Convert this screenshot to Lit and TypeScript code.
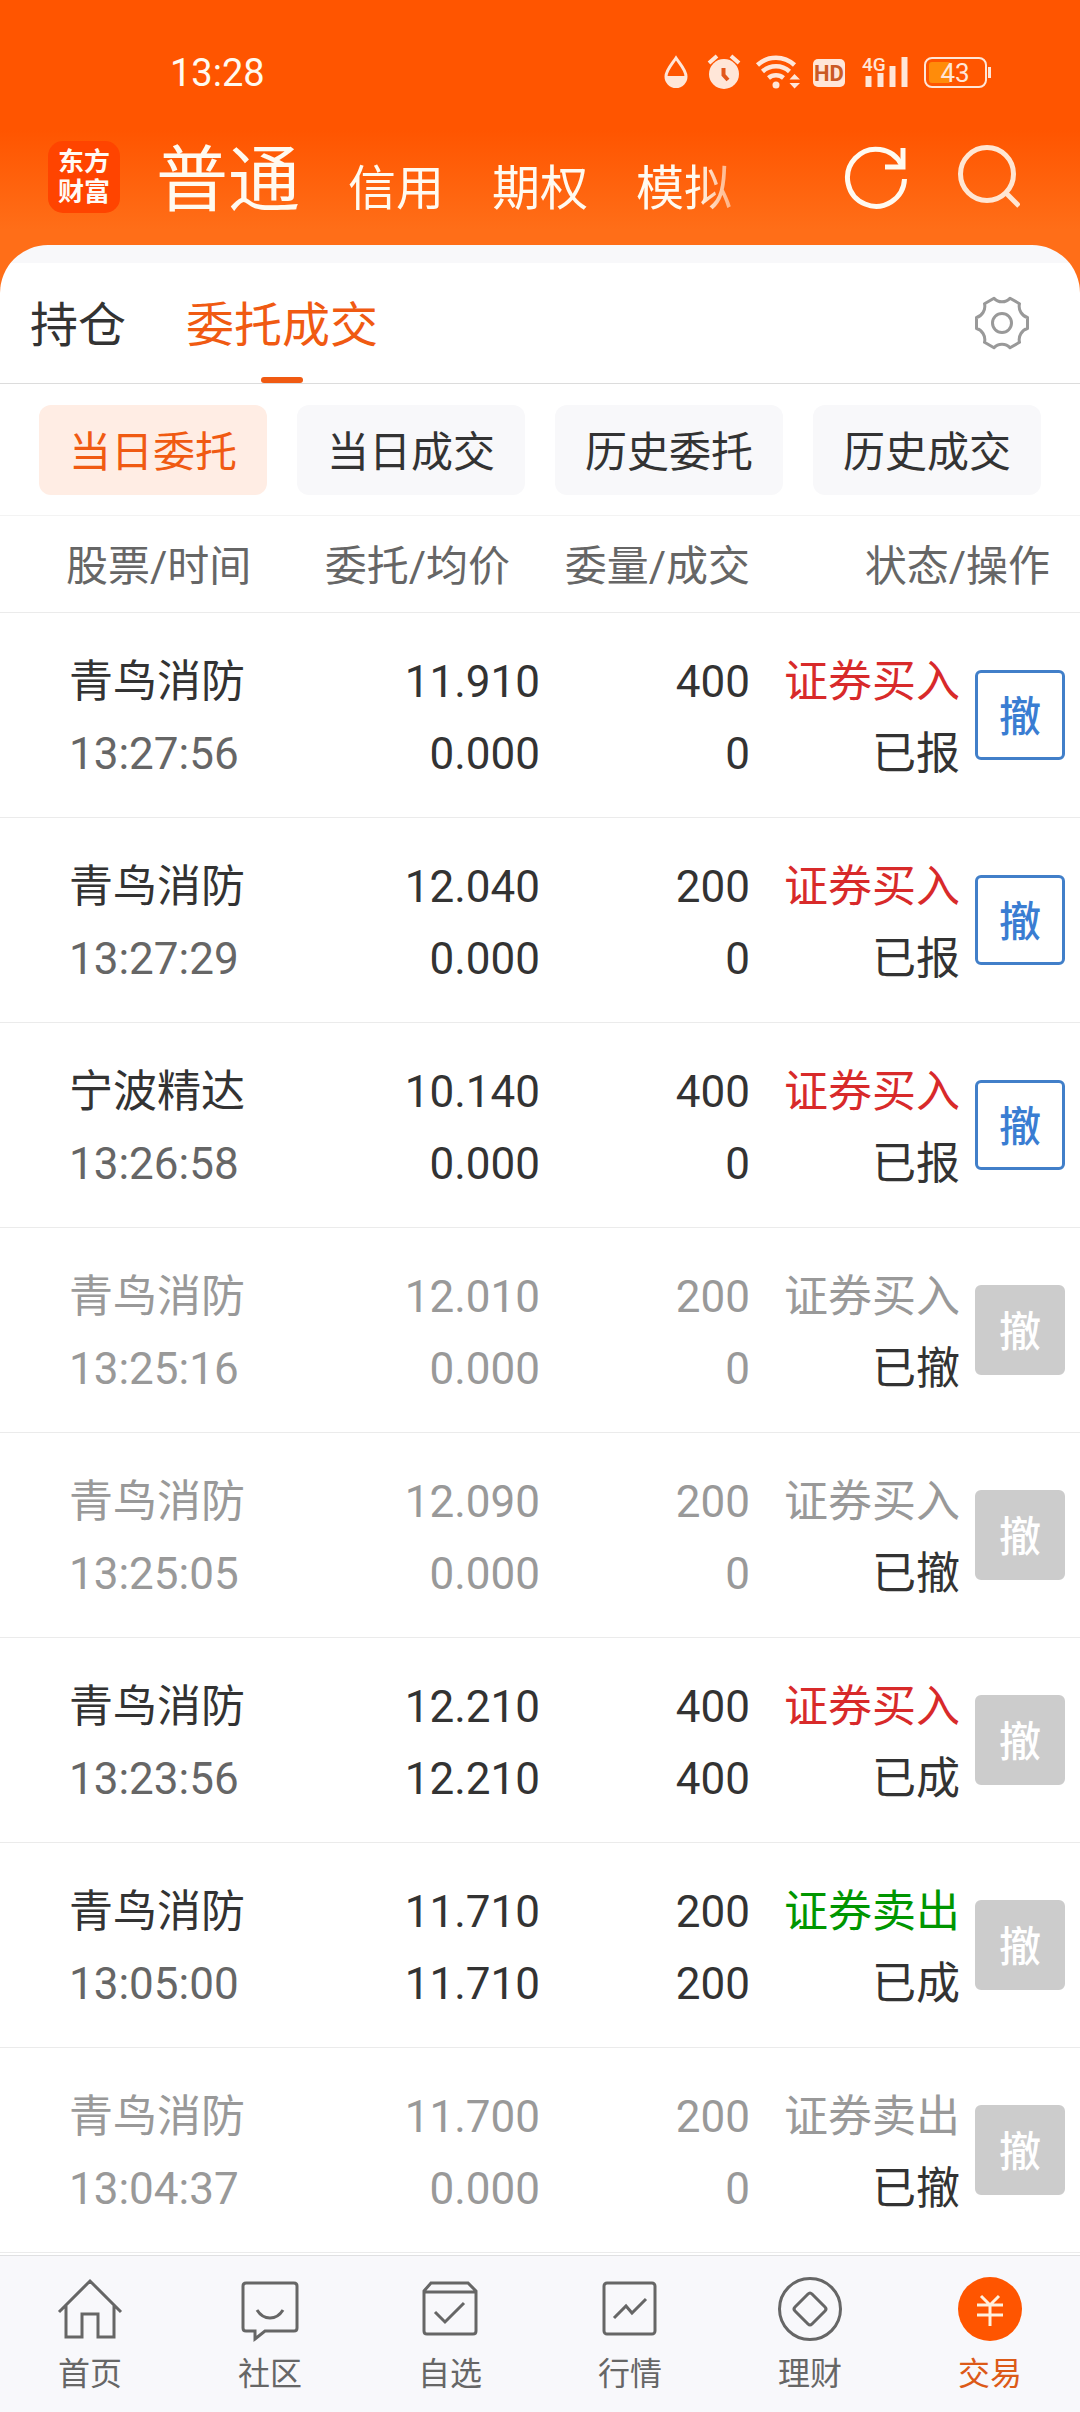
import { LitElement, html, css, svg } from "lit";
import { customElement, property, state } from "lit/decorators.js";
import { classMap } from "lit/directives/class-map.js";

interface Order {
  name: string;
  time: string;
  price: string;
  average: string;
  quantity: string;
  filled: string;
  side: "buy" | "sell";
  status: string;
}

const ORDERS: Order[] = [
  { name: "青鸟消防", time: "13:27:56", price: "11.910", average: "0.000", quantity: "400", filled: "0", side: "buy", status: "已报" },
  { name: "青鸟消防", time: "13:27:29", price: "12.040", average: "0.000", quantity: "200", filled: "0", side: "buy", status: "已报" },
  { name: "宁波精达", time: "13:26:58", price: "10.140", average: "0.000", quantity: "400", filled: "0", side: "buy", status: "已报" },
  { name: "青鸟消防", time: "13:25:16", price: "12.010", average: "0.000", quantity: "200", filled: "0", side: "buy", status: "已撤" },
  { name: "青鸟消防", time: "13:25:05", price: "12.090", average: "0.000", quantity: "200", filled: "0", side: "buy", status: "已撤" },
  { name: "青鸟消防", time: "13:23:56", price: "12.210", average: "12.210", quantity: "400", filled: "400", side: "buy", status: "已成" },
  { name: "青鸟消防", time: "13:05:00", price: "11.710", average: "11.710", quantity: "200", filled: "200", side: "sell", status: "已成" },
  { name: "青鸟消防", time: "13:04:37", price: "11.700", average: "0.000", quantity: "200", filled: "0", side: "sell", status: "已撤" },
];

@customElement("status-bar")
class StatusBar extends LitElement {
  static styles = css`
    :host {
      display: flex;
      align-items: center;
      justify-content: space-between;
      height: 72px;
      padding: 36px 88px 0 170px;
      color: #fffaf0;
    }
    .time {
      padding-top: 2px;
      font-size: 38px;
      line-height: 48px;
    }
    .icons {
      display: flex;
      gap: 12px;
      color: #ffe6d8;
    }
    .icons svg {
      display: block;
      height: 36px;
      overflow: visible;
    }
    .label {
      font-family: Roboto, sans-serif;
    }
  `;

  render() {
    return html`
      <span class="time">13:28</span>
      <div class="icons">
        <svg width="32" height="36" viewBox="0 0 32 36" aria-hidden="true">
          <path d="M12 4C8.500 9.500 2 16 2 22.500A10 10 0 0 0 22 22.500C22 16 15.500 9.500 12 4Z" fill="none" stroke="currentColor" stroke-width="3" />
          <path d="M2 22H22A10 11 0 0 1 2 22Z" fill="currentColor" />
        </svg>
        <svg width="36" height="36" viewBox="0 0 36 36" aria-hidden="true">
          <circle cx="16" cy="20" r="15" fill="currentColor" />
          <path d="M1 9L9 2M23 2L31 9" stroke="currentColor" stroke-width="4" />
          <path d="M15.500 14V21L20 26" fill="none" stroke="#e2561a" stroke-width="4" />
        </svg>
        <svg width="45" height="36" viewBox="0 0 45 36" aria-hidden="true">
          <g fill="none" stroke="currentColor" stroke-width="4.500">
            <path d="M1.500 11A27 27 0 0 1 38.500 11" />
            <path d="M6.500 17.500A20 20 0 0 1 33.500 17.500" />
            <path d="M12.500 24A11.500 11.500 0 0 1 27.500 24" />
          </g>
          <circle cx="20" cy="31" r="3.500" fill="currentColor" />
          <path d="M33.500 25.500L38.500 20L44 25.500ZM33.500 29L38.500 34.500L44 29Z" fill="currentColor" />
        </svg>
        <svg width="37" height="36" viewBox="0 0 37 36" role="img" aria-label="HD">
          <rect x="0" y="5" width="32" height="28" rx="5" fill="currentColor" />
          <text class="label" x="16" y="27" font-size="22" font-weight="700" text-anchor="middle" fill="#cb5a24">HD</text>
        </svg>
        <svg width="50" height="36" viewBox="0 0 50 36" role="img" aria-label="4G">
          <text class="label" x="0" y="17" font-size="19" font-weight="500" fill="currentColor">4G</text>
          <path d="M6.500 22V33M18.500 19V33M30.500 12V33M42.500 3V33" stroke="currentColor" stroke-width="6" />
        </svg>
        <svg width="68" height="36" viewBox="0 0 68 36" role="img" aria-label="43%">
          <rect x="5" y="8" width="22" height="21" rx="3" fill="#ff8c0a" />
          <rect x="1" y="4" width="61" height="29" rx="7" fill="none" stroke="currentColor" stroke-width="2" />
          <path d="M65.500 13V24" stroke="currentColor" stroke-width="3" />
          <text class="label" x="31" y="28" font-size="26" text-anchor="middle" fill="currentColor">43</text>
        </svg>
      </div>
    `;
  }
}

@customElement("account-header")
class AccountHeader extends LitElement {
  static styles = css`
    :host {
      display: flex;
      align-items: center;
      height: 137px;
      padding: 0 60px 0 48px;
    }
    button {
      padding: 0;
      border: 0;
      background: none;
      font: inherit;
      color: inherit;
    }
    .logo {
      display: grid;
      place-items: center;
      flex: none;
      width: 72px;
      height: 72px;
      border-radius: 15px;
      background: #ff4400;
      color: #fffaf5;
      font-size: 26px;
      line-height: 30px;
      font-weight: 700;
      text-decoration: none;
      text-align: center;
    }
    .accounts {
      display: flex;
      align-items: baseline;
      flex: 1;
      gap: 48px;
      min-width: 0;
      margin: 0 72px 0 36px;
      padding-top: 16px;
      overflow: hidden;
      color: #fffaf0;
      font-size: 48px;
      line-height: 96px;
      white-space: nowrap;
      mask-image: linear-gradient(to right, #000 calc(100% - 76px), transparent calc(100% - 4px));
    }
    .accounts .current {
      font-size: 72px;
    }
    .tools {
      display: flex;
      gap: 48px;
    }
    .tools svg {
      display: block;
    }
    .refresh {
      color: #fffaf0;
    }
    .search {
      color: #ffe6d3;
    }
  `;

  render() {
    return html`
      <a class="logo" href="#home"><span>东方<br />财富</span></a>
      <nav class="accounts" aria-label="账户类型">
        <button class="current" type="button">普通</button>
        <button type="button">信用</button>
        <button type="button">期权</button>
        <button type="button">模拟</button>
      </nav>
      <div class="tools">
        <button class="refresh" type="button" aria-label="刷新">
          <svg width="64" height="64" viewBox="0 0 64 64" fill="none" stroke="currentColor" stroke-width="5">
            <path d="M60.500 34A28.500 28.500 0 1 1 57.500 20" />
            <path d="M59 3V22H41" />
          </svg>
        </button>
        <button class="search" type="button" aria-label="搜索">
          <svg width="64" height="64" viewBox="0 0 64 64" fill="none" stroke="currentColor" stroke-width="5">
            <circle cx="31" cy="29" r="26.500" />
            <path d="M50 48L63 61" />
          </svg>
        </button>
      </div>
    `;
  }
}

@customElement("order-table")
class OrderTable extends LitElement {
  @property({ attribute: false }) orders: Order[] = [];

  static styles = css`
    :host {
      display: block;
    }
    table {
      width: 100%;
      table-layout: fixed;
      border-collapse: separate;
      border-spacing: 0;
      color: #333;
      font-size: 44px;
      line-height: 72px;
      text-align: right;
      white-space: nowrap;
    }
    .figure-col {
      width: 210px;
    }
    .action-col {
      width: 120px;
    }
    th,
    td {
      box-sizing: border-box;
      border-bottom: 1px solid #ebebeb;
    }
    th {
      height: 97px;
      padding: 6px 0 0;
      color: #666;
      font-size: 42px;
      font-weight: 400;
    }
    td {
      height: 205px;
      padding: 5px 0 0;
    }
    span {
      display: block;
    }
    .stock-head {
      padding-left: 66px;
      text-align: left;
    }
    .inset-head {
      padding-right: 30px;
    }
    .stock {
      padding-left: 69px;
      text-align: left;
    }
    .time {
      color: #666;
    }
    .buy {
      color: #d82a2a;
    }
    .sell {
      color: #009600;
    }
    .cancelled .dim {
      color: #999;
    }
    .action {
      padding: 0 15px 0 0;
    }
    .cancel {
      display: block;
      box-sizing: border-box;
      width: 90px;
      height: 90px;
      margin-left: auto;
      padding: 6px 0 0;
      border: 3px solid #417fc9;
      border-radius: 6px;
      background: #fff;
      color: #3a7dd2;
      font-family: inherit;
      font-size: 42px;
      line-height: 60px;
      font-weight: 500;
    }
    .cancel:disabled {
      border-color: #ccc;
      background: #ccc;
      color: #fff;
    }
  `;

  private renderOrder(order: Order) {
    const cancelled = order.status === "已撤";
    return html`
      <tr class=${classMap({ cancelled })}>
        <td class="stock">
          <span class="dim">${order.name}</span>
          <span class="time dim">${order.time}</span>
        </td>
        <td>
          <span class="dim">${order.price}</span>
          <span class="dim">${order.average}</span>
        </td>
        <td>
          <span class="dim">${order.quantity}</span>
          <span class="dim">${order.filled}</span>
        </td>
        <td>
          <span class="${order.side} dim">${order.side === "buy" ? "证券买入" : "证券卖出"}</span>
          <span>${order.status}</span>
        </td>
        <td class="action">
          <button class="cancel" type="button" ?disabled=${order.status !== "已报"}>撤</button>
        </td>
      </tr>
    `;
  }

  render() {
    return html`
      <table>
        <colgroup>
          <col />
          <col />
          <col class="figure-col" />
          <col class="figure-col" />
          <col class="action-col" />
        </colgroup>
        <thead>
          <tr>
            <th class="stock-head" scope="col">股票/时间</th>
            <th class="inset-head" scope="col">委托/均价</th>
            <th scope="col">委量/成交</th>
            <th class="inset-head" scope="colgroup" colspan="2">状态/操作</th>
          </tr>
        </thead>
        <tbody>
          ${this.orders.map((order) => this.renderOrder(order))}
        </tbody>
      </table>
    `;
  }
}

const NAV_ITEMS = [
  {
    label: "首页",
    icon: svg`<path d="M-31 3L0 -28L31 3M-24 -4V28H-8V5H8V28H24V-4" />`,
  },
  {
    label: "社区",
    icon: svg`<path d="M-24 -26H24Q27 -26 27 -23V19Q27 22 24 22H-5L-15 30V22H-24Q-27 22 -27 19V-23Q-27 -26 -24 -26Z" /><path d="M-13 1Q-8 9 0 9T13 1" />`,
  },
  {
    label: "自选",
    icon: svg`<path d="M-26 -18L-19 -26H18L26 -18V22Q26 25 23 25H-23Q-26 25 -26 22ZM-26 -17H26M-15 3L-5 13L14 -6" />`,
  },
  {
    label: "行情",
    icon: svg`<rect x="-26" y="-26" width="51" height="51" rx="3" /><path d="M-16 9L-4 -3L2 4L16 -10" />`,
  },
  {
    label: "理财",
    icon: svg`<circle r="30.500" /><path d="M-2 -15Q0 -17 2 -15L15 -2Q17 0 15 2L2 15Q0 17 -2 15L-15 2Q-17 0 -15 -2Z" />`,
  },
  {
    label: "交易",
    icon: svg`<circle r="32" fill="#ff5500" stroke="none" /><path d="M-9 -13L0 -4L9 -13M0 -4V17M-13 -4H13M-13 6H13" stroke="#fff0dc" />`,
  },
];

@customElement("bottom-nav")
class BottomNav extends LitElement {
  static styles = css`
    :host {
      display: block;
    }
    .bar {
      display: flex;
      padding: 21px 0 18px;
      border-top: 1px solid #e0e0e2;
      background: #f8f8fb;
    }
    .item {
      display: flex;
      flex: 1;
      flex-direction: column;
      align-items: center;
      gap: 13px;
      color: #666;
      font-size: 32px;
      line-height: 40px;
      text-decoration: none;
    }
    .item svg {
      display: block;
      overflow: visible;
    }
    .active {
      color: #dc5a18;
    }
  `;

  render() {
    return html`
      <nav class="bar" aria-label="主导航">
        ${NAV_ITEMS.map(
          (item) => html`
            <a class=${classMap({ item: true, active: item.label === "交易" })} href="#${item.label}">
              <svg width="64" height="64" viewBox="-32 -32 64 64" fill="none" stroke="currentColor" stroke-width="3" aria-hidden="true">
                ${item.icon}
              </svg>
              ${item.label}
            </a>
          `
        )}
      </nav>
    `;
  }
}

@customElement("app-root")
class AppRoot extends LitElement {
  @state() private filter = "当日委托";

  static styles = css`
    :host {
      display: flex;
      flex-direction: column;
      min-height: 100vh;
      background: linear-gradient(#ff5500 130px, #ff6e18 230px);
      font-family: Roboto, "Noto Sans CJK SC", sans-serif;
    }
    button {
      padding: 0;
      border: 0;
      background: none;
      font: inherit;
      color: inherit;
    }
    .panel {
      display: flow-root;
      flex: 1;
      padding: 18px 0 2px;
      border-radius: 48px 48px 0 0;
      background: linear-gradient(#f8f8fa 18px, #fff 18px);
      overflow: hidden;
    }
    .tabs {
      display: flex;
      align-items: stretch;
      gap: 60px;
      height: 120px;
      padding: 0 50px 0 30px;
      border-bottom: 1px solid #dcdcdc;
      color: #333;
      font-size: 48px;
      line-height: 72px;
    }
    .tab {
      position: relative;
      padding-top: 6px;
    }
    .tab.active {
      color: #f05a12;
    }
    .tab.active::after {
      content: "";
      position: absolute;
      bottom: 0;
      left: 50%;
      width: 42px;
      height: 6px;
      margin-left: -21px;
      border-radius: 3px;
      background: #f05a12;
    }
    .settings {
      display: flex;
      align-items: center;
      margin-left: auto;
      color: #999;
    }
    .filters {
      display: grid;
      grid-template-columns: repeat(4, 1fr);
      gap: 30px;
      padding: 21px 39px 20px;
      border-bottom: 1px solid #f3f3f3;
    }
    .chip {
      height: 90px;
      padding-top: 6px;
      border-radius: 12px;
      background: #f8f8fa;
      color: #333;
      font-size: 42px;
      line-height: 60px;
    }
    .chip.active {
      background: #ffede4;
      color: #f05a12;
    }
  `;

  render() {
    const filters = ["当日委托", "当日成交", "历史委托", "历史成交"];
    return html`
      <status-bar></status-bar>
      <account-header></account-header>
      <main class="panel">
        <div class="tabs">
          <button class="tab" type="button">持仓</button>
          <button class="tab active" type="button">委托成交</button>
          <button class="settings" type="button" aria-label="设置">
            <svg width="56" height="56" viewBox="-28 -28 56 56" fill="none" stroke="currentColor" stroke-width="3" stroke-linejoin="round">
              <path
                d="M25.500 -5.500V5.500C20 7 16 13 17.500 19.300L8 24.800C4 20 -4 20 -8 24.800L-17.500 19.300C-16 13 -20 7 -25.500 5.500V-5.500C-20 -7 -16 -13 -17.500 -19.300L-8 -24.800C-4 -20 4 -20 8 -24.800L17.500 -19.300C16 -13 20 -7 25.500 -5.500Z"
              />
              <circle r="9.500" />
            </svg>
          </button>
        </div>
        <div class="filters">
          ${filters.map(
            (label) => html`
              <button
                class=${classMap({ chip: true, active: label === this.filter })}
                type="button"
                @click=${() => (this.filter = label)}
              >
                ${label}
              </button>
            `
          )}
        </div>
        <order-table .orders=${ORDERS}></order-table>
      </main>
      <bottom-nav></bottom-nav>
    `;
  }
}
